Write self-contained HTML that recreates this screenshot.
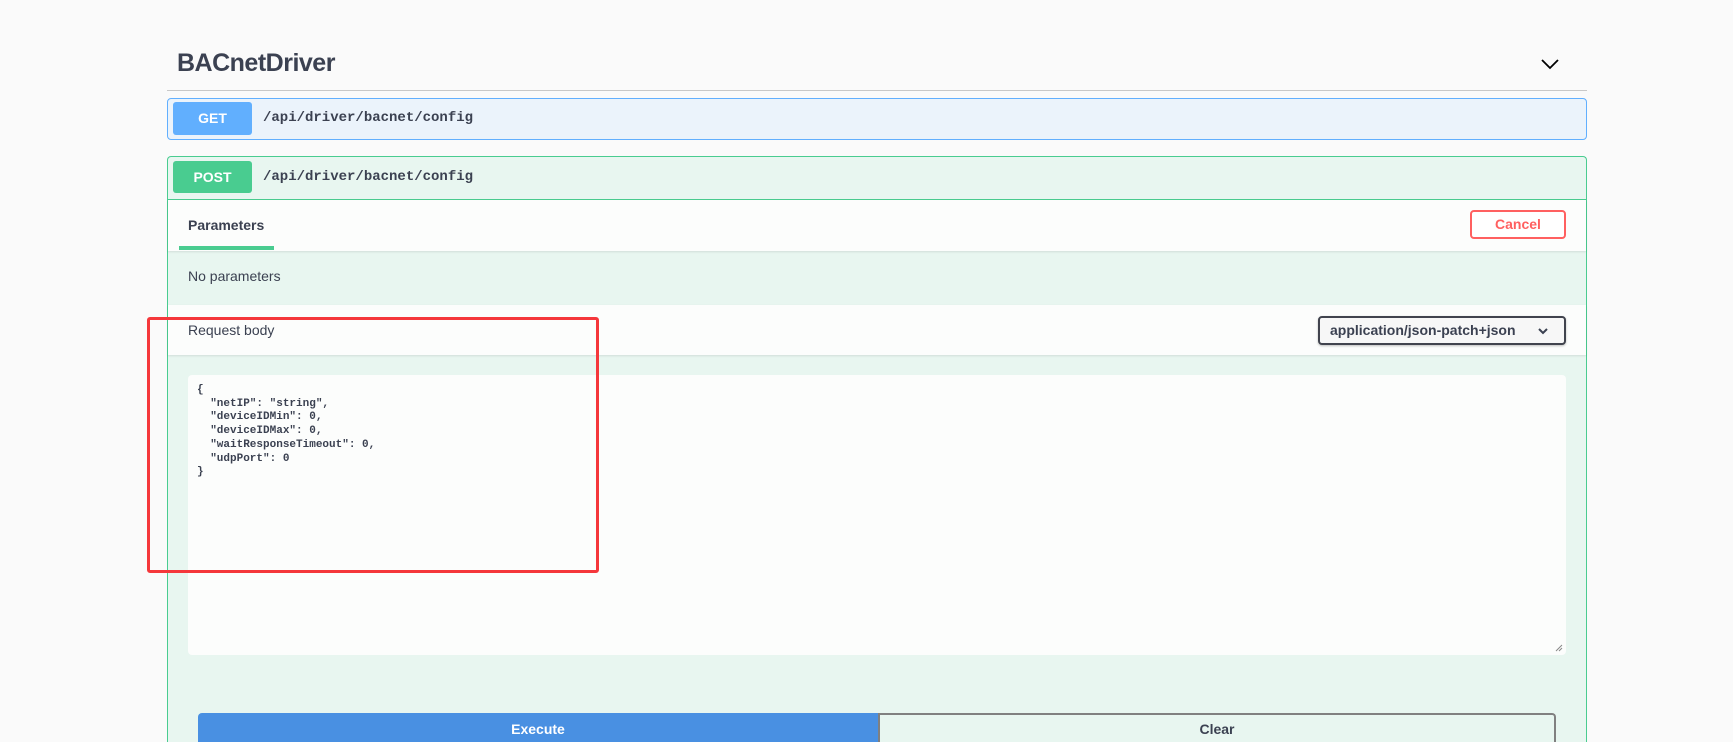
<!DOCTYPE html>
<html><head><meta charset="utf-8"><style>
*{box-sizing:border-box;margin:0;padding:0}
html{overflow:hidden}
body{width:1733px;height:742px;background:#fafafa;font-family:"Liberation Sans",sans-serif;color:#3b4151;position:relative;overflow:hidden}
.abs{position:absolute}
.mono{font-family:"Liberation Mono",monospace}
</style></head><body>
<div class="abs" style="left:177px;top:49px;font-size:25px;font-weight:bold;color:#3b4151;letter-spacing:-0.5px">BACnetDriver</div>
<svg class="abs" style="left:1540px;top:57px" width="20" height="14" viewBox="0 0 20 14"><path d="M2 3 L10 11 L18 3" fill="none" stroke="#000" stroke-width="1.8"/></svg>
<div class="abs" style="left:167px;top:90px;width:1420px;height:1px;background:#c8c8c8"></div>

<div class="abs" style="left:167px;top:98px;width:1420px;height:42px;background:#ebf3fb;border:1px solid #61affe;border-radius:4px"></div>
<div class="abs" style="left:173px;top:102px;width:79px;height:33px;background:#61affe;border-radius:3px;color:#fff;font-weight:bold;font-size:14px;text-align:center;line-height:33px">GET</div>
<div class="abs mono" style="left:263px;top:110px;font-size:14px;font-weight:bold;color:#3b4151">/api/driver/bacnet/config</div>

<div class="abs" style="left:167px;top:156px;width:1420px;height:586px;background:#e8f6f0;border:1px solid #49cc90;border-bottom:none;border-radius:4px 4px 0 0"></div>
<div class="abs" style="left:173px;top:161px;width:79px;height:32px;background:#49cc90;border-radius:3px;color:#fff;font-weight:bold;font-size:14px;text-align:center;line-height:32px">POST</div>
<div class="abs mono" style="left:263px;top:169px;font-size:14px;font-weight:bold;color:#3b4151">/api/driver/bacnet/config</div>
<div class="abs" style="left:168px;top:199px;width:1418px;height:1px;background:#49cc90"></div>
<div class="abs" style="left:168px;top:200px;width:1418px;height:51px;background:#fcfdfc;box-shadow:0 1px 2px rgba(0,0,0,.1)"></div>
<div class="abs" style="left:188px;top:217px;font-size:14px;font-weight:bold">Parameters</div>
<div class="abs" style="left:179px;top:246px;width:95px;height:4px;background:#49cc90"></div>
<div class="abs" style="left:1470px;top:210px;width:96px;height:29px;border:2px solid #ff6060;border-radius:4px;color:#ff6060;font-weight:bold;font-size:14px;text-align:center;line-height:25px;background:#fff">Cancel</div>
<div class="abs" style="left:188px;top:268px;font-size:14px">No parameters</div>

<div class="abs" style="left:168px;top:305px;width:1418px;height:50px;background:#fcfdfc;box-shadow:0 1px 2px rgba(0,0,0,.1)"></div>
<div class="abs" style="left:188px;top:322px;font-size:14px">Request body</div>
<div class="abs" style="left:1318px;top:316px;width:248px;height:29px;border:2px solid #41444e;border-radius:4px;background:#f7f7f7;font-weight:bold;font-size:14px;line-height:25px;padding-left:10px;box-shadow:0 1px 2px rgba(0,0,0,.25)">application/json-patch+json</div>
<svg class="abs" style="left:1537px;top:326px" width="12" height="10" viewBox="0 0 12 10"><path d="M2 3 L6 7 L10 3" fill="none" stroke="#3b4151" stroke-width="2"/></svg>

<div class="abs" style="left:188px;top:375px;width:1378px;height:280px;background:#fcfdfc;border-radius:4px"></div>
<pre class="abs mono" style="left:197px;top:384px;font-size:11px;font-weight:bold;line-height:13.7px;color:#3b4151">{
  "netIP": "string",
  "deviceIDMin": 0,
  "deviceIDMax": 0,
  "waitResponseTimeout": 0,
  "udpPort": 0
}</pre>
<svg class="abs" style="left:1555px;top:644px" width="8" height="8"><path d="M1 7 L7 1 M4 7 L7 4" stroke="#888" stroke-width="1"/></svg>

<div class="abs" style="left:147px;top:317px;width:452px;height:256px;border:3px solid #f5373b;border-radius:3px"></div>

<div class="abs" style="left:198px;top:713px;width:680px;height:29px;background:#4990e2;border-radius:4px 0 0 0;color:#fff;font-weight:bold;font-size:14px;text-align:center;line-height:32px;overflow:hidden">Execute</div>
<div class="abs" style="left:878px;top:713px;width:678px;height:29px;border:2px solid #808080;border-bottom:none;border-radius:0 4px 0 0;color:#3b4151;font-weight:bold;font-size:14px;text-align:center;line-height:28px;overflow:hidden">Clear</div>
</body></html>
